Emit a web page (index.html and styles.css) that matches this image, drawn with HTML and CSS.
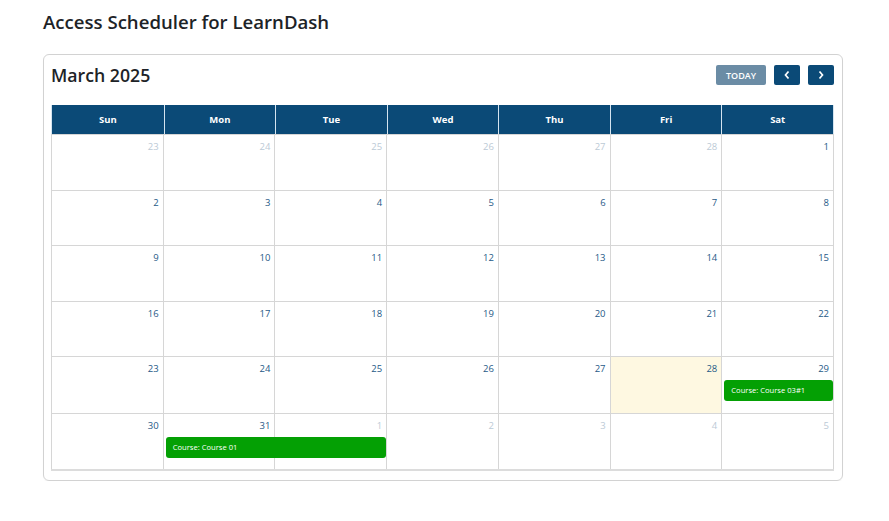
FILE: index.html
```html
<!DOCTYPE html>
<html lang="en">
<head>
<meta charset="utf-8">
<title>Access Scheduler for LearnDash</title>
<link rel="stylesheet" href="styles.css">
</head>
<body>
<div class="wrap">
  <h1 class="page-title">Access Scheduler for LearnDash</h1>
  <div class="card">
    <div class="toolbar">
      <h2 class="month">March 2025</h2>
      <div class="nav">
        <button class="btn btn-today">TODAY</button>
        <button class="btn btn-arrow" aria-label="Previous month">
          <svg width="8" height="10" viewBox="0 0 8 10"><path d="M5.5 1.5 2.5 5l3 3.5" fill="none" stroke="#fff" stroke-width="1.7"/></svg>
        </button>
        <button class="btn btn-arrow" aria-label="Next month">
          <svg width="8" height="10" viewBox="0 0 8 10"><path d="M2.5 1.5 5.5 5l-3 3.5" fill="none" stroke="#fff" stroke-width="1.7"/></svg>
        </button>
      </div>
    </div>

    <div class="cal">
      <div class="cal-head">
        <div>Sun</div><div>Mon</div><div>Tue</div><div>Wed</div><div>Thu</div><div>Fri</div><div>Sat</div>
      </div>

      <div class="week">
        <div class="day other"><span class="num">23</span></div>
        <div class="day other"><span class="num">24</span></div>
        <div class="day other"><span class="num">25</span></div>
        <div class="day other"><span class="num">26</span></div>
        <div class="day other"><span class="num">27</span></div>
        <div class="day other"><span class="num">28</span></div>
        <div class="day"><span class="num">1</span></div>
      </div>
      <div class="week">
        <div class="day"><span class="num">2</span></div>
        <div class="day"><span class="num">3</span></div>
        <div class="day"><span class="num">4</span></div>
        <div class="day"><span class="num">5</span></div>
        <div class="day"><span class="num">6</span></div>
        <div class="day"><span class="num">7</span></div>
        <div class="day"><span class="num">8</span></div>
      </div>
      <div class="week">
        <div class="day"><span class="num">9</span></div>
        <div class="day"><span class="num">10</span></div>
        <div class="day"><span class="num">11</span></div>
        <div class="day"><span class="num">12</span></div>
        <div class="day"><span class="num">13</span></div>
        <div class="day"><span class="num">14</span></div>
        <div class="day"><span class="num">15</span></div>
      </div>
      <div class="week">
        <div class="day"><span class="num">16</span></div>
        <div class="day"><span class="num">17</span></div>
        <div class="day"><span class="num">18</span></div>
        <div class="day"><span class="num">19</span></div>
        <div class="day"><span class="num">20</span></div>
        <div class="day"><span class="num">21</span></div>
        <div class="day"><span class="num">22</span></div>
      </div>
      <div class="week week-tall">
        <div class="day"><span class="num">23</span></div>
        <div class="day"><span class="num">24</span></div>
        <div class="day"><span class="num">25</span></div>
        <div class="day"><span class="num">26</span></div>
        <div class="day"><span class="num">27</span></div>
        <div class="day today"><span class="num">28</span></div>
        <div class="day"><span class="num">29</span></div>
        <div class="event ev-sat">Course: Course 03#1</div>
      </div>
      <div class="week">
        <div class="day"><span class="num">30</span></div>
        <div class="day"><span class="num">31</span></div>
        <div class="day other"><span class="num">1</span></div>
        <div class="day other"><span class="num">2</span></div>
        <div class="day other"><span class="num">3</span></div>
        <div class="day other"><span class="num">4</span></div>
        <div class="day other"><span class="num">5</span></div>
        <div class="event ev-mon-tue">Course: Course 01</div>
      </div>
    </div>
  </div>
</div>
</body>
</html>
```

FILE: styles.css
```css
* { box-sizing: border-box; }

body {
  margin: 0;
  background: #fff;
  font-family: "Open Sans", "Noto Sans", sans-serif;
  color: #1d2327;
}

.wrap {
  width: 800px;
  margin-left: 43px;
  padding-top: 8px;
}

.page-title {
  margin: 0;
  font-size: 18.6px;
  font-weight: 600;
  line-height: 28px;
  color: #1d2327;
}

.card {
  margin-top: 18px;
  border: 1px solid #d2d2d2;
  border-radius: 6px;
  padding: 10px 8px 9px 7px;
  box-shadow: 0 1px 1px rgba(0,0,0,0.04);
}

.toolbar {
  display: flex;
  justify-content: space-between;
  align-items: center;
  height: 20px;
  margin-bottom: 20px;
}

.month {
  margin: 0;
  font-size: 17.7px;
  font-weight: 600;
  color: #1d2327;
  line-height: 20px;
}

.nav {
  display: flex;
  gap: 8px;
}

.btn {
  border: 0;
  height: 20px;
  border-radius: 2px;
  color: #fff;
  font-family: inherit;
  cursor: pointer;
  display: flex;
  align-items: center;
  justify-content: center;
  padding: 0;
}

.btn-today {
  width: 50px;
  background: #6b8ca5;
  font-size: 9px;
  font-weight: 600;
}

.btn-arrow {
  width: 26px;
  background: #0b4a77;
}

.cal {
  border-bottom: 2px solid #dcdcdc;
}

.cal-head {
  display: grid;
  grid-template-columns: repeat(7, 1fr);
  background: #0b4a77;
  height: 29px;
  border: 1px solid #d4e4f0;
  border-bottom: 0;
  border-top: 0;
}

.cal-head div {
  display: flex;
  align-items: center;
  justify-content: center;
  color: #fff;
  font-size: 9.5px;
  font-weight: 700;
  border-left: 1px solid #d4e4f0;
}

.cal-head div:first-child { border-left: 0; }

.week {
  display: grid;
  grid-template-columns: repeat(7, 1fr);
  grid-template-rows: 55.5px;
  border-left: 1px solid #d6d6d6;
}

.week-tall { grid-template-rows: 57px; }

.day {
  grid-row: 1;
  border-right: 1px solid #d6d6d6;
  border-top: 1px solid #d6d6d6;
  text-align: right;
  padding: 5px 4px 0 0;
  font-size: 9.5px;
  line-height: 14px;
}

.day:nth-child(1) { grid-column: 1; }
.day:nth-child(2) { grid-column: 2; }
.day:nth-child(3) { grid-column: 3; }
.day:nth-child(4) { grid-column: 4; }
.day:nth-child(5) { grid-column: 5; }
.day:nth-child(6) { grid-column: 6; }
.day:nth-child(7) { grid-column: 7; }

.num { color: #1f5a87; }

.other .num { color: #bccad6; }

.today { background: #fef8e1; }

.event {
  grid-row: 1;
  align-self: start;
  margin-top: 24px;
  height: 21px;
  background: #04a004;
  color: #fff;
  font-size: 7.6px;
  line-height: 21px;
  padding-left: 7px;
  border-radius: 3px;
  white-space: nowrap;
}

.ev-sat {
  grid-column: 7;
  margin-left: 2px;
  margin-right: 1px;
}

.ev-mon-tue {
  grid-column: 2 / 4;
  margin-left: 2px;
  margin-right: 1px;
}
```
